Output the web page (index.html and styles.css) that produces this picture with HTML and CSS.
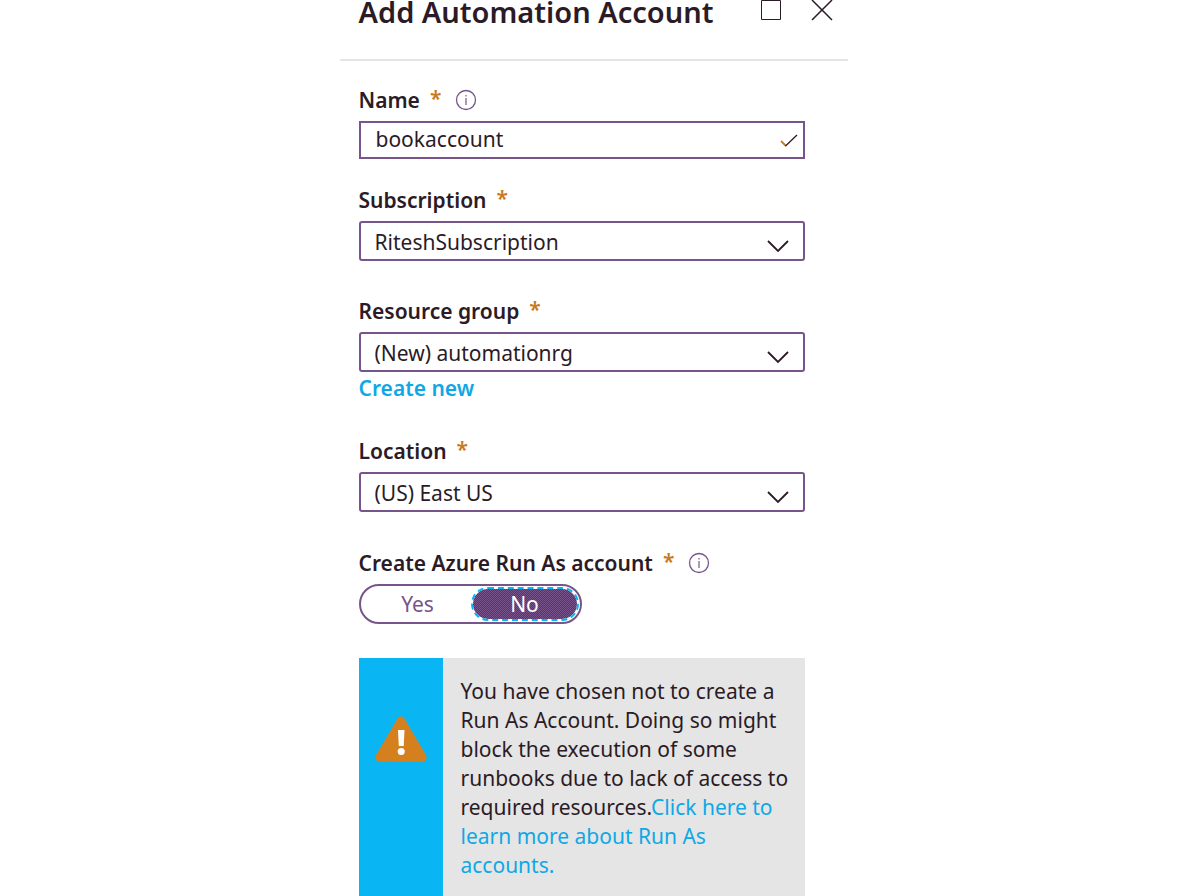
FILE: index.html
```html
<!DOCTYPE html>
<html lang="en">
<head>
<meta charset="utf-8">
<meta name="viewport" content="width=device-width, initial-scale=1">
<title>Add Automation Account</title>
<link rel="stylesheet" href="styles.css">
</head>
<body>
<main class="blade">
  <header class="blade-header">
    <h1 class="blade-title">Add Automation Account</h1>
    <div class="window-actions">
      <button class="icon-button" type="button" aria-label="Maximize">
        <svg width="22" height="22" viewBox="0 0 22 22" aria-hidden="true"><path d="M1.500.5h19v19h-19z" fill="none" stroke="currentColor"/></svg>
      </button>
      <button class="icon-button" type="button" aria-label="Close">
        <svg width="22" height="22" viewBox="0 0 22 22" aria-hidden="true"><path d="M1 0l20 20M21 0L1 20" fill="none" stroke="currentColor" stroke-width="1.500"/></svg>
      </button>
    </div>
  </header>

  <form class="form">
    <div class="field">
      <div class="label-row">
        <label class="label" for="name">Name</label>
        <span class="required">*</span>
        <button class="info" type="button" aria-label="About the name">
          <svg width="22" height="22" viewBox="0 0 22 22" aria-hidden="true"><circle cx="11" cy="11" r="9.500" fill="none" stroke="currentColor" stroke-width="1.300"/><path d="M11 9v7M11 6v1.500" stroke="currentColor" stroke-width="1.200"/></svg>
        </button>
      </div>
      <div class="control">
        <input class="text-box" id="name" type="text" value="bookaccount">
        <svg class="check" width="18" height="14" viewBox="0 0 18 14" aria-hidden="true"><path class="check-short" d="M1 7l5 5"/><path class="check-long" d="M5.500 12L17 1"/></svg>
      </div>
    </div>

    <div class="field">
      <div class="label-row">
        <label class="label" for="subscription">Subscription</label>
        <span class="required">*</span>
      </div>
      <div class="control">
        <select class="select" id="subscription"><option>RiteshSubscription</option></select>
        <svg class="chevron" width="24" height="14" viewBox="0 0 24 14" aria-hidden="true"><path d="M2 2l10 10L22 2"/></svg>
      </div>
    </div>

    <div class="field">
      <div class="label-row">
        <label class="label" for="group">Resource group</label>
        <span class="required">*</span>
      </div>
      <div class="control">
        <select class="select" id="group"><option>(New) automationrg</option></select>
        <svg class="chevron" width="24" height="14" viewBox="0 0 24 14" aria-hidden="true"><path d="M2 2l10 10L22 2"/></svg>
      </div>
      <a class="create-link" href="#">Create new</a>
    </div>

    <div class="field">
      <div class="label-row">
        <label class="label" for="location">Location</label>
        <span class="required">*</span>
      </div>
      <div class="control">
        <select class="select" id="location"><option>(US) East US</option></select>
        <svg class="chevron" width="24" height="14" viewBox="0 0 24 14" aria-hidden="true"><path d="M2 2l10 10L22 2"/></svg>
      </div>
    </div>

    <div class="field" role="radiogroup" aria-labelledby="run-as">
      <div class="label-row">
        <span class="label" id="run-as">Create Azure Run As account</span>
        <span class="required">*</span>
        <button class="info" type="button" aria-label="About Run As accounts">
          <svg width="22" height="22" viewBox="0 0 22 22" aria-hidden="true"><circle cx="11" cy="11" r="9.500" fill="none" stroke="currentColor" stroke-width="1.300"/><path d="M11 9v7M11 6v1.500" stroke="currentColor" stroke-width="1.200"/></svg>
        </button>
      </div>
      <div class="toggle">
        <input class="toggle-input" type="radio" name="runas" id="yes">
        <label class="toggle-option" for="yes">Yes</label>
        <input class="toggle-input" type="radio" name="runas" id="no" checked>
        <label class="toggle-option" for="no">No</label>
      </div>
    </div>

    <div class="notice" role="status">
      <div class="notice-side">
        <svg width="52" height="46" viewBox="0 0 52 46" aria-hidden="true">
          <path d="M22.800 2.200Q26-1.600 29.200 2.200L51 39Q53 44.500 48 45.500H4Q-1 44.500 1 39z" fill="#d5801e"/>
          <path d="M23 14h6.500l-.8 16h-4.900z" fill="#fff"/><circle cx="26.200" cy="35.500" r="3.500" fill="#fff"/>
        </svg>
      </div>
      <p class="notice-text">You have chosen not to create a Run As Account. Doing so might block the execution of some runbooks due to lack of access to required resources.<a class="notice-link" href="#">Click here to learn more about Run As accounts.</a></p>
    </div>
  </form>
</main>
</body>
</html>
```
FILE: styles.css
```css
:root {
  --ink: #2b1b26;
  --purple: #77558a;
  --blue: #09b6f3;
  --link: #0fa8e6;
  --orange: #c97a1e;
}

* {
  box-sizing: border-box;
}

body {
  margin: 0;
  background: #fff;
  color: var(--ink);
  font: 21px/30px "Noto Sans", "Open Sans", sans-serif;
}

.blade {
  display: flex;
  flex-direction: column;
  max-width: 508px;
  min-height: 100vh;
  margin: 0 auto;
}

.blade-header {
  display: flex;
  justify-content: space-between;
  padding: 0 15px 35px 19px;
  border-bottom: 2px solid #e5e5e5;
}

.blade-title {
  margin: 0;
  font-size: 29px;
  line-height: 24px;
  font-weight: 600;
}

.window-actions {
  display: flex;
  gap: 29px;
}

.icon-button,
.info {
  display: block;
  height: 22px;
  padding: 0;
  border: 0;
  background: none;
  color: var(--ink);
}

.icon-button svg,
.info svg {
  display: block;
}

.form {
  display: flex;
  flex: 1;
  flex-direction: column;
  padding: 24px 43px 0 19px;
}

.field {
  display: flex;
  flex-direction: column;
  margin-bottom: 35px;
}

.field:first-child {
  margin-bottom: 26px;
}

.field:nth-child(3) {
  margin-bottom: 32px;
}

.field:nth-child(4) {
  margin-bottom: 36px;
}

.field:nth-child(5) {
  margin-bottom: 34px;
}

.label-row {
  display: flex;
  align-items: center;
  margin-bottom: 6px;
}

.label {
  font-weight: 600;
}

.required {
  margin-left: 10px;
  padding-bottom: 4px;
  color: var(--orange);
  font-weight: 600;
  line-height: 26px;
}

.info {
  margin-left: 14px;
  color: var(--purple);
}

.control {
  position: relative;
}

.text-box,
.select {
  display: block;
  width: 100%;
  border: 2px solid var(--purple);
  background: #fff;
  color: var(--ink);
  font: inherit;
  appearance: none;
}

.text-box {
  height: 38px;
  padding: 0 40px 2px 15px;
}

.select {
  height: 40px;
  padding: 1px 48px 0 14px;
  border-radius: 3px;
}

.check,
.chevron {
  position: absolute;
  fill: none;
  stroke: var(--ink);
  pointer-events: none;
}

.check {
  top: 13px;
  right: 7px;
  stroke-width: 1.3;
}

.check-short {
  stroke: var(--orange);
  stroke-width: 1.8;
}

.chevron {
  top: 18px;
  right: 15px;
  stroke-width: 1.8;
}

.create-link {
  align-self: flex-start;
  line-height: 32px;
  color: var(--link);
  font-weight: 600;
  text-decoration: none;
}

.toggle {
  display: grid;
  grid-template-columns: 110px 108px;
  align-self: flex-start;
  height: 40px;
  padding-right: 1px;
  border: 2px solid var(--purple);
  border-radius: 20px;
}

.toggle-input {
  position: absolute;
  opacity: 0;
}

.toggle-option {
  color: var(--purple);
  line-height: 36px;
  text-align: center;
}

.toggle-option:first-of-type {
  padding-left: 4px;
}

.toggle-input:checked + .toggle-option {
  margin: 1px 0;
  border: 2px dashed var(--blue);
  border-radius: 17px;
  background: repeating-conic-gradient(#53375f 0 25%, #77558a 0 50%) 0 0 / 2px 2px padding-box;
  color: #fff;
  line-height: 30px;
}

.notice {
  display: flex;
  flex: 1;
  background: #e5e5e5;
}

.notice-side {
  flex: 0 0 84px;
  padding-top: 58px;
  background: var(--blue);
  text-align: center;
}

.notice-text {
  margin: 0;
  padding: 19px 13px 15px 18px;
  line-height: 29px;
}

.notice-link {
  color: var(--link);
  text-decoration: none;
}
```
